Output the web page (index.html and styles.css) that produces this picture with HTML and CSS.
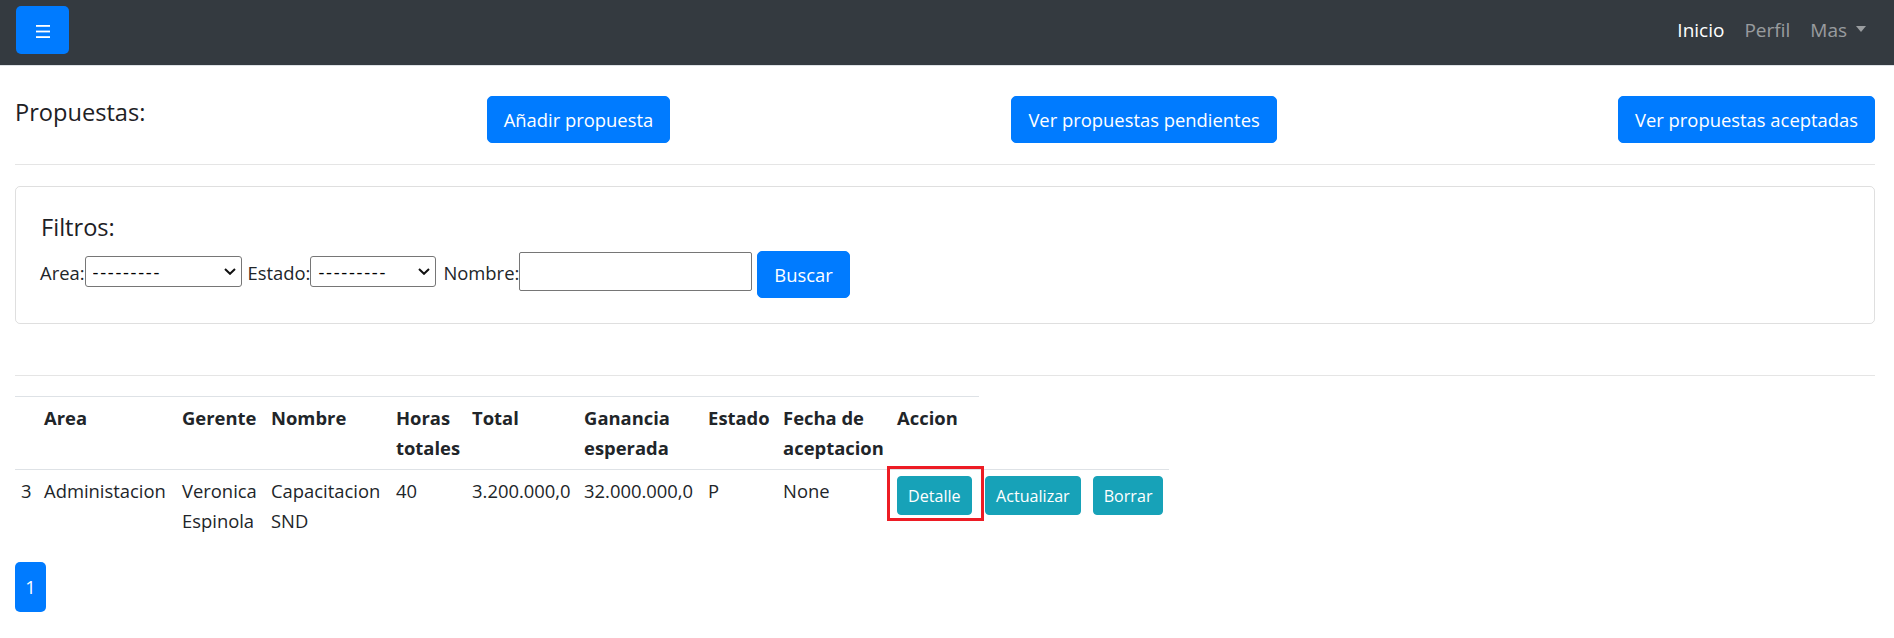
FILE: index.html
```html
<!DOCTYPE html>
<html lang="es">
<head>
<meta charset="utf-8">
<title>Propuestas</title>
<link rel="stylesheet" href="styles.css">
</head>
<body>
<nav class="navbar">
  <button class="toggler" type="button" aria-label="Menu">
    <svg class="toggler-icon" width="14" height="13" viewBox="0 0 14 13" aria-hidden="true">
      <rect x="0" y="0" width="14" height="1.8" fill="#fff"/>
      <rect x="0" y="5.6" width="14" height="1.8" fill="#fff"/>
      <rect x="0" y="11.2" width="14" height="1.8" fill="#fff"/>
    </svg>
  </button>
  <ul class="nav">
    <li><a class="nav-link active" href="#">Inicio</a></li>
    <li><a class="nav-link" href="#">Perfil</a></li>
    <li><a class="nav-link" href="#">Mas<span class="caret"></span></a></li>
  </ul>
</nav>

<main class="container">
  <div class="top-row">
    <h5 class="page-title">Propuestas:</h5>
    <a class="btn btn-primary" href="#">Añadir propuesta</a>
    <a class="btn btn-primary" href="#">Ver propuestas pendientes</a>
    <a class="btn btn-primary" href="#">Ver propuestas aceptadas</a>
  </div>

  <hr class="sep sep-top">

  <section class="card">
    <h5 class="card-title">Filtros:</h5>
    <form class="filters">
      <span class="flabel">Area:</span>
      <span class="select-wrap sel-area">
        <select class="fselect"><option>---------</option></select>
        <svg class="chev" width="12" height="7" viewBox="0 0 12 7" aria-hidden="true"><path d="M1 1 L6 5.8 L11 1" fill="none" stroke="#111" stroke-width="2"/></svg>
      </span>
      <span class="flabel gap-est">Estado:</span>
      <span class="select-wrap sel-estado">
        <select class="fselect"><option>---------</option></select>
        <svg class="chev" width="12" height="7" viewBox="0 0 12 7" aria-hidden="true"><path d="M1 1 L6 5.8 L11 1" fill="none" stroke="#111" stroke-width="2"/></svg>
      </span>
      <span class="flabel gap-nom">Nombre:</span>
      <input class="finput" type="text">
      <button class="btn btn-primary btn-buscar" type="button">Buscar</button>
    </form>
  </section>

  <hr class="sep sep-bottom">

  <table class="table">
    <thead>
      <tr>
        <th class="c-num"></th>
        <th class="c-area">Area</th>
        <th class="c-ger">Gerente</th>
        <th class="c-nom">Nombre</th>
        <th class="c-horas">Horas totales</th>
        <th class="c-total">Total</th>
        <th class="c-gan">Ganancia esperada</th>
        <th class="c-est">Estado</th>
        <th class="c-fecha">Fecha de aceptacion</th>
        <th class="c-acc">Accion</th>
      </tr>
    </thead>
    <tbody>
      <tr>
        <td>3</td>
        <td>Administacion</td>
        <td>Veronica Espinola</td>
        <td>Capacitacion SND</td>
        <td>40</td>
        <td>3.200.000,0</td>
        <td>32.000.000,0</td>
        <td>P</td>
        <td>None</td>
        <td><span class="highlight"><a class="btn btn-sm btn-info" href="#">Detalle</a></span></td>
        <td><a class="btn btn-sm btn-info" href="#">Actualizar</a></td>
        <td><a class="btn btn-sm btn-info" href="#">Borrar</a></td>
      </tr>
    </tbody>
  </table>

  <ul class="pagination">
    <li><a class="page-link" href="#">1</a></li>
  </ul>
</main>
</body>
</html>
```

FILE: styles.css
```css
* {
  box-sizing: border-box;
}

html,
body {
  margin: 0;
}

body {
  font-family: "Open Sans", "Noto Sans", "Liberation Sans", sans-serif;
  font-size: 18.4px;
  line-height: 30px;
  color: #212529;
  background: #fff;
}

/* ---------- navbar ---------- */
.navbar {
  display: flex;
  align-items: center;
  justify-content: space-between;
  height: 66px;
  padding: 6px 18px 11px 16px;
  background: #343a40;
  border-bottom: 1px solid #dee2e6;
}

.toggler {
  display: flex;
  align-items: center;
  justify-content: center;
  width: 53px;
  height: 48px;
  padding: 2px 0 0;
  border: 0;
  border-radius: 5px;
  background: #007bff;
}

.nav {
  display: flex;
  margin: 0;
  padding: 0;
  list-style: none;
}

.nav-link {
  display: block;
  padding: 0 10px;
  font-size: 19px;
  line-height: 28.8px;
  color: rgba(255, 255, 255, 0.5);
  text-decoration: none;
}

.nav-link.active {
  color: #fff;
}

.caret {
  display: inline-block;
  margin-left: 9px;
  vertical-align: 5px;
  border-top: 6px solid;
  border-left: 5.5px solid transparent;
  border-right: 5.5px solid transparent;
}

/* ---------- content ---------- */
.container {
  padding: 30px 19px 0 15px;
}

.top-row {
  display: flex;
  align-items: flex-start;
  justify-content: space-between;
}

.page-title {
  margin: 3px 0 0;
  font-size: 23.6px;
  font-weight: 500;
  line-height: 27.6px;
  color: #1d2125;
}

.btn {
  display: inline-flex;
  align-items: center;
  justify-content: center;
  height: 47px;
  padding: 0 16px;
  border: 1px solid transparent;
  border-radius: 5px;
  font: inherit;
  line-height: 28px;
  color: #fff;
  text-decoration: none;
  white-space: nowrap;
  cursor: pointer;
  vertical-align: top;
}

.btn-primary {
  background: #007bff;
  border-color: #007bff;
}

.btn-info {
  background: #17a2b8;
  border-color: #17a2b8;
}

.btn-sm {
  height: 39px;
  padding: 0 10px;
  font-size: 16.1px;
  border-radius: 4px;
}

.sep {
  height: 0;
  border: 0;
  border-top: 1px solid rgba(0, 0, 0, 0.1);
  margin: 21px 0;
}

.sep-bottom {
  margin: 51px 0 20px;
}

/* ---------- filter card ---------- */
.card {
  border: 1px solid rgba(0, 0, 0, 0.125);
  border-radius: 5px;
  padding: 24px 24px 25px;
}

.card-title {
  margin: 0 0 7px;
  padding-left: 1px;
  font-size: 23.6px;
  font-weight: 500;
  line-height: 32px;
  color: #1d2125;
}

.filters {
  display: flex;
  align-items: flex-start;
}

.flabel {
  margin-top: 8px;
  line-height: 30px;
  white-space: nowrap;
}

.gap-est {
  margin-left: 6px;
}

.gap-nom {
  margin-left: 7px;
}

.select-wrap {
  position: relative;
  display: block;
  height: 31px;
  margin-top: 6px;
}

.sel-area {
  width: 157px;
}

.sel-estado {
  width: 126px;
}

.fselect {
  appearance: none;
  -webkit-appearance: none;
  display: block;
  width: 100%;
  height: 100%;
  margin: 0;
  padding: 0 24px 0 7px;
  border: 1px solid #767676;
  border-radius: 3px;
  background: #fff;
  font-family: inherit;
  font-size: 18.4px;
  letter-spacing: 1.7px;
  color: #000;
}

.chev {
  position: absolute;
  top: 12px;
  right: 6px;
  pointer-events: none;
}

.finput {
  width: 233px;
  height: 39px;
  margin: 2px 0 0;
  padding: 0 6px;
  border: 1px solid #767676;
  border-radius: 2px;
  font: inherit;
}

.btn-buscar {
  margin: 1px 0 0 5px;
}

/* ---------- table ---------- */
.table {
  border-collapse: collapse;
  margin-bottom: 20px;
}

.table th,
.table td {
  padding: 6px;
  border-top: 1px solid #dee2e6;
  text-align: left;
  vertical-align: top;
  line-height: 30px;
}

.table th {
  font-weight: 700;
}

.c-num { width: 23px; }
.c-area { width: 138px; }
.c-ger { width: 89px; }
.c-nom { width: 125px; }
.c-horas { width: 75px; }
.c-total { width: 112px; }
.c-gan { width: 124px; }
.c-est { width: 75px; }
.c-fecha { width: 114px; }
.c-acc { width: 88px; }

.highlight {
  position: relative;
  display: inline-flex;
  vertical-align: top;
}

.highlight::after {
  content: "";
  position: absolute;
  top: -10px;
  left: -10px;
  right: -12px;
  bottom: -6px;
  border: 3px solid #ed1c24;
  pointer-events: none;
}

/* ---------- pagination ---------- */
.pagination {
  display: flex;
  margin: 0;
  padding: 0;
  list-style: none;
}

.page-link {
  display: flex;
  align-items: center;
  justify-content: center;
  min-width: 31px;
  height: 50px;
  padding: 0 10px;
  border-radius: 5px;
  background: #007bff;
  color: #fff;
  text-decoration: none;
}
```
